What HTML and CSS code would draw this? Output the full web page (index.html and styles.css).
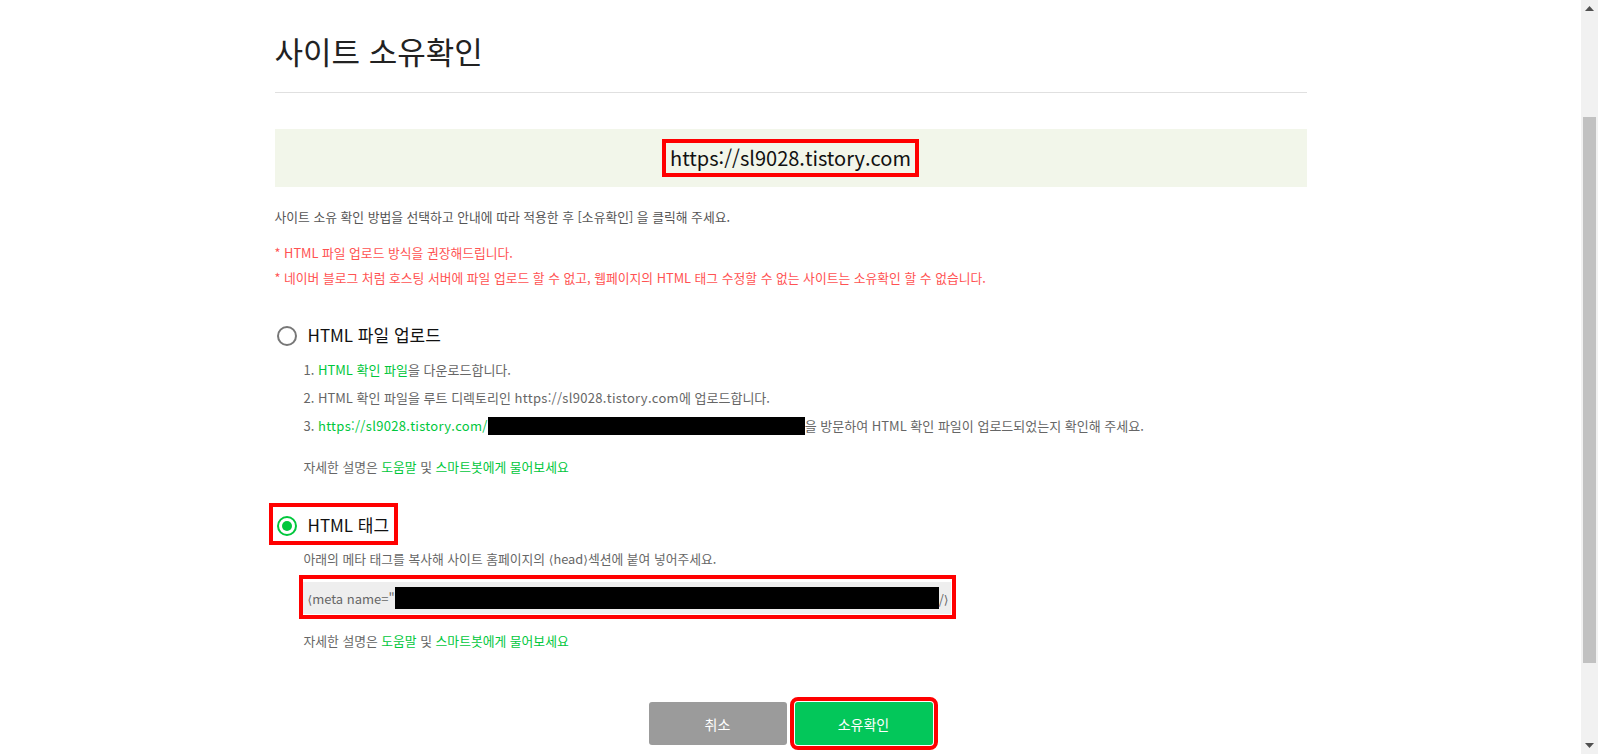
FILE: index.html
```html
<!DOCTYPE html>
<html lang="ko">
<head>
  <meta charset="UTF-8">
  <meta name="viewport" content="width=device-width, initial-scale=1.0">
  <title>사이트 소유확인</title>
  <link rel="stylesheet" href="styles.css">
</head>
<body>
  <div class="page">
    <div class="main">
      <div class="wrap">
        <h1 class="title">사이트 소유확인</h1>

        <div class="site-box">
          <span class="site-url">https://sl9028.tistory.com</span>
        </div>

        <p class="desc">사이트 소유 확인 방법을 선택하고 안내에 따라 적용한 후 [소유확인] 을 클릭해 주세요.</p>
        <ul class="notes">
          <li>* HTML 파일 업로드 방식을 권장해드립니다.</li>
          <li>* 네이버 블로그 처럼 호스팅 서버에 파일 업로드 할 수 없고, 웹페이지의 HTML 태그 수정할 수 없는 사이트는 소유확인 할 수 없습니다.</li>
        </ul>

        <div class="option">
          <label class="option-head">
            <span class="radio"></span>
            HTML 파일 업로드
          </label>
          <ol class="steps">
            <li>1. <a href="#" class="link">HTML 확인 파일</a>을 다운로드합니다.</li>
            <li>2. HTML 확인 파일을 루트 디렉토리인 <span class="latin">https://sl9028.tistory.com</span>에 업로드합니다.</li>
            <li>3. <a href="#" class="link latin">https://sl9028.tistory.com/</a><span class="redact-line"></span>을 방문하여 HTML 확인 파일이 업로드되었는지 확인해 주세요.</li>
          </ol>
          <p class="help">자세한 설명은 <a href="#" class="link">도움말</a> 및 <a href="#" class="link">스마트봇에게 물어보세요</a></p>
        </div>

        <div class="option">
          <label class="option-head option-marked">
            <span class="radio radio-checked"></span>
            HTML 태그
          </label>
          <p class="option-text">아래의 메타 태그를 복사해 사이트 홈페이지의 <span class="angle">⟨</span>head<span class="angle">⟩</span>섹션에 붙여 넣어주세요.</p>
          <div class="meta-box">
            <div class="meta-code">
              <span><span class="angle">⟨</span>meta name="</span>
              <span class="redact"></span>
              <span>/<span class="angle">⟩</span></span>
            </div>
          </div>
          <p class="help help-last">자세한 설명은 <a href="#" class="link">도움말</a> 및 <a href="#" class="link">스마트봇에게 물어보세요</a></p>
        </div>

        <div class="buttons">
          <button class="btn btn-cancel">취소</button>
          <button class="btn btn-confirm">소유확인</button>
        </div>
      </div>
    </div>

    <div class="scrollbar">
      <div class="scroll-arrow">
        <svg width="9" height="5" viewBox="0 0 9 5"><polygon points="0,5 4.5,0 9,5" fill="#505050"/></svg>
      </div>
      <div class="scroll-thumb"></div>
      <div class="scroll-space"></div>
      <div class="scroll-arrow">
        <svg width="9" height="5" viewBox="0 0 9 5"><polygon points="0,0 9,0 4.5,5" fill="#505050"/></svg>
      </div>
    </div>
  </div>
</body>
</html>
```

FILE: styles.css
```css
body {
  margin: 0;
  font-family: "Noto Sans CJK KR", "Noto Sans", sans-serif;
  background: #fff;
}
.page {
  display: flex;
  height: 754px;
  overflow: hidden;
}
.main {
  flex: 1;
}
.wrap {
  width: 1032px;
  margin: 0 auto;
}
.title {
  margin: 0;
  padding: 31px 0 21px;
  font-size: 31px;
  line-height: 40px;
  font-weight: 400;
  color: #222;
  border-bottom: 1px solid #e0e0e0;
}
.site-box {
  margin-top: 36px;
  height: 58px;
  background: #f2f6ea;
  display: flex;
  align-items: center;
  justify-content: center;
}
.site-url {
  font-size: 20px;
  line-height: 30px;
  padding: 0 4px;
  color: #111;
  border: 4px solid #f00;
}
.desc {
  margin: 21px 0 0;
  font-size: 12.8px;
  line-height: 18px;
  color: #555;
}
.notes {
  list-style: none;
  margin: 14px 0 0;
  padding: 0;
  font-size: 12.8px;
  line-height: 25px;
  color: #ff5252;
}
.option-head {
  display: flex;
  align-items: center;
  gap: 11px;
  height: 24px;
  margin-top: 32px;
  padding-left: 2px;
  font-size: 17px;
  color: #111;
}
.option-marked {
  box-sizing: border-box;
  width: fit-content;
  height: 42px;
  margin: 22px 0 0 -6px;
  padding: 0 5px 0 4px;
  border: 4px solid #f00;
}
.radio {
  box-sizing: border-box;
  width: 20px;
  height: 20px;
  margin-top: 3px;
  border: 2px solid #777;
  border-radius: 50%;
  display: flex;
  align-items: center;
  justify-content: center;
}
.radio-checked {
  border-color: #00c73c;
}
.radio-checked::after {
  content: "";
  width: 10px;
  height: 10px;
  border-radius: 50%;
  background: #00c73c;
}
.steps {
  list-style: none;
  margin: 10px 0 0;
  padding: 0 0 0 29px;
  font-size: 13px;
  line-height: 28px;
  color: #666;
}
.latin {
  letter-spacing: 0.3px;
}
.angle {
  font-family: "DejaVu Sans", sans-serif;
  font-size: 12px;
}
.link {
  color: #00c73c;
  text-decoration: none;
}
.redact-line {
  display: inline-block;
  width: 317px;
  height: 18px;
  background: #000;
  vertical-align: -4px;
}
.help {
  margin: 13px 0 0;
  padding-left: 29px;
  font-size: 12.8px;
  line-height: 28px;
  color: #666;
}
.help-last {
  margin-top: 8px;
}
.option-text {
  margin: 0;
  padding-left: 29px;
  font-size: 12.8px;
  line-height: 28px;
  color: #666;
}
.meta-box {
  box-sizing: border-box;
  width: 657px;
  margin: 1px 0 0 24px;
  padding: 3px 1px 1px 0;
  border: 4px solid #f00;
}
.meta-code {
  display: flex;
  align-items: center;
  height: 32px;
  padding: 0 2px 0 5px;
  background: #eee;
  font-size: 13px;
  color: #666;
}
.redact {
  flex: 1;
  height: 22px;
  background: #000;
}
.buttons {
  display: flex;
  justify-content: center;
  gap: 8px;
  margin-top: 47px;
}
.btn {
  width: 138px;
  height: 43px;
  border: 0;
  border-radius: 3px;
  color: #fff;
  font-family: inherit;
  font-size: 14px;
  font-weight: 400;
  cursor: pointer;
}
.btn-cancel {
  background: #9b9b9b;
}
.btn-confirm {
  background: #03c75a;
  outline: 4px solid #f00;
  outline-offset: 1px;
}
.scrollbar {
  width: 17px;
  background: #f1f1f1;
  display: flex;
  flex-direction: column;
  align-items: center;
}
.scroll-arrow {
  height: 17px;
  width: 17px;
  display: flex;
  align-items: center;
  justify-content: center;
}
.scroll-thumb {
  width: 13px;
  height: 546px;
  margin-top: 100px;
  background: #c1c1c1;
}
.scroll-space {
  flex: 1;
}
```
